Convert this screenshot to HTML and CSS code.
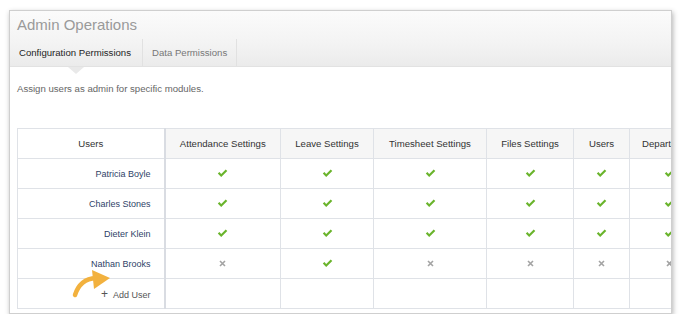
FILE: index.html
```html
<!DOCTYPE html>
<html lang="en">
<head>
    <meta charset="UTF-8">
    <meta name="viewport" content="width=device-width, initial-scale=1.0">
    <title>Admin Operations</title>
    <link rel="stylesheet" href="styles.css">
</head>
<body>
    <div class="card">
        <div class="header">
            <h1 class="title">Admin Operations</h1>
            <div class="tabs">
                <div class="tab active">Configuration Permissions</div>
                <div class="tab">Data Permissions</div>
            </div>
        </div>

        <div class="content">
            <p class="desc">Assign users as admin for specific modules.</p>

            <table class="perms">
                <colgroup>
                    <col class="c-users">
                    <col class="c-att">
                    <col class="c-leave">
                    <col class="c-time">
                    <col class="c-files">
                    <col class="c-usr">
                    <col class="c-dep">
                </colgroup>
                <thead>
                    <tr>
                        <th class="user-col">Users</th>
                        <th>Attendance Settings</th>
                        <th>Leave Settings</th>
                        <th>Timesheet Settings</th>
                        <th>Files Settings</th>
                        <th>Users</th>
                        <th>Departments</th>
                    </tr>
                </thead>
                <tbody id="rows"></tbody>
            </table>
        </div>
    </div>

    <script>
        const users = [
            { name: 'Patricia Boyle', perms: [1, 1, 1, 1, 1, 1] },
            { name: 'Charles Stones', perms: [1, 1, 1, 1, 1, 1] },
            { name: 'Dieter Klein', perms: [1, 1, 1, 1, 1, 1] },
            { name: 'Nathan Brooks', perms: [0, 1, 0, 0, 0, 0] }
        ];

        const check = '<svg class="ico" width="11" height="9" viewBox="0 0 11 9"><path d="M0.8 4.6 L2.4 3.1 L4.2 4.9 L8.7 0.6 L10.3 2.1 L4.2 8 Z" fill="#6ab42c"/></svg>';
        const cross = '<svg class="ico" width="7" height="7" viewBox="0 0 7 7"><path d="M1 1 L6 6 M6 1 L1 6" stroke="#a3a3a3" stroke-width="1.6"/></svg>';

        const tbody = document.getElementById('rows');

        users.forEach(u => {
            const tr = document.createElement('tr');
            let html = `<td class="user-col name">${u.name}</td>`;
            u.perms.forEach(p => {
                html += `<td>${p ? check : cross}</td>`;
            });
            tr.innerHTML = html;
            tbody.appendChild(tr);
        });

        // fila para agregar usuario
        const addRow = document.createElement('tr');
        let addHtml = `<td class="user-col add">
            <svg class="arrow" width="42" height="30" viewBox="0 0 42 30">
                <path d="M3 27 Q8 11 24 10" fill="none" stroke="#f2b13e" stroke-width="4.5" stroke-linecap="round"/>
                <path d="M20 2 L38 10 L22 21 Z" fill="#f2b13e"/>
            </svg>
            <span class="plus">+</span> Add User</td>`;
        for (let i = 0; i < 6; i++) addHtml += '<td></td>';
        addRow.innerHTML = addHtml;
        tbody.appendChild(addRow);
    </script>
</body>
</html>
```

FILE: styles.css
```css
* {
    margin: 0;
    padding: 0;
    box-sizing: border-box;
}

body {
    font-family: "Liberation Sans", Arial, sans-serif;
    background: #fff;
    padding: 10px 0 0 9px;
}

.card {
    width: 663px;
    height: 304px;
    background: #fff;
    border: 1px solid #cfcfcf;
    box-shadow: 1px 2px 5px rgba(0, 0, 0, 0.3);
    overflow: hidden;
}

.header {
    height: 56px;
    background: linear-gradient(#fbfbfb 0%, #f3f3f3 60%, #ebebeb 100%);
    border-bottom: 1px solid #e2e2e2;
}

.title {
    height: 28px;
    padding: 5px 0 0 7px;
    font-size: 15px;
    font-weight: normal;
    color: #9a9a9a;
    line-height: 18px;
}

.tabs {
    display: flex;
    height: 27px;
}

.tab {
    position: relative;
    padding: 0 9px;
    font-size: 9.6px;
    line-height: 27px;
    color: #777;
    border-right: 1px solid #e1e1e1;
}

.tab.active {
    color: #1e1e1e;
    width: 133px;
}

.tab.active::after {
    content: "";
    position: absolute;
    left: 58px;
    top: 28px;
    border-left: 8px solid transparent;
    border-right: 8px solid transparent;
    border-top: 7px solid #e9e9e9;
}

.content {
    padding: 16px 0 0 7px;
}

.desc {
    font-size: 9.6px;
    color: #666;
    line-height: 12px;
    margin-bottom: 33px;
}

.perms {
    border-collapse: collapse;
    table-layout: fixed;
    width: 692px;
}

.c-users { width: 147px; }
.c-att { width: 116px; }
.c-leave { width: 93px; }
.c-time { width: 113px; }
.c-files { width: 87px; }
.c-usr { width: 56px; }
.c-dep { width: 80px; }

.perms th,
.perms td {
    height: 30px;
    border: 1px solid #dfe2e7;
    text-align: center;
    vertical-align: middle;
    padding: 0;
}

.perms th {
    background: #f6f6f6;
    font-size: 9.6px;
    font-weight: normal;
    color: #333;
    white-space: nowrap;
    overflow: hidden;
}

.perms th.user-col {
    background: #fff;
}

.perms .user-col {
    border-right: 2px solid #d9dce2;
}

.perms td.name {
    text-align: right;
    padding-right: 13px;
    font-size: 9px;
    color: #2f3f68;
}

.perms td.add {
    position: relative;
    text-align: right;
    padding-right: 13px;
    font-size: 9px;
    color: #555;
}

.plus {
    font-size: 12px;
    color: #555;
    margin-right: 3px;
}

.ico {
    display: block;
    margin: 0 auto;
}

.arrow {
    position: absolute;
    left: 54px;
    top: -11px;
}
```
